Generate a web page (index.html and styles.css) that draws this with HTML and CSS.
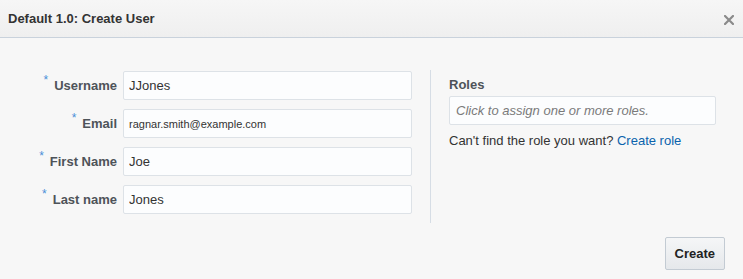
FILE: index.html
```html
<!DOCTYPE html>
<html>
<head>
<meta charset="utf-8">
<link rel="stylesheet" href="styles.css">
</head>
<body>
<div class="dialog">
  <header class="dlg-head">
    <h1 class="dlg-title">Default 1.0: Create User</h1>
    <span class="dlg-close" aria-label="Close">
      <svg width="10" height="10" viewBox="0 0 10 10"><path d="M1 1L9 9M9 1L1 9" stroke="#8a8a8a" stroke-width="2.2" stroke-linecap="square"/></svg>
    </span>
  </header>
  <div class="dlg-body">
    <div class="cols">
      <form class="user-form">
        <label class="lbl"><span class="req">*</span>Username</label>
        <input class="inp" type="text" value="JJones">
        <label class="lbl"><span class="req">*</span>Email</label>
        <input class="inp inp-small" type="text" value="ragnar.smith@example.com">
        <label class="lbl"><span class="req">*</span>First Name</label>
        <input class="inp" type="text" value="Joe">
        <label class="lbl"><span class="req">*</span>Last name</label>
        <input class="inp" type="text" value="Jones">
      </form>
      <section class="roles">
        <div class="roles-lbl">Roles</div>
        <div class="roles-inp">Click to assign one or more roles.</div>
        <p class="roles-help">Can't find the role you want? <a class="link" href="#">Create role</a></p>
      </section>
    </div>
    <div class="actions">
      <button class="btn" type="button">Create</button>
    </div>
  </div>
</div>
</body>
</html>
```
FILE: styles.css
```css
* { box-sizing: border-box; }
html, body { margin: 0; padding: 0; }
body {
  font-family: "Liberation Sans", Arial, sans-serif;
  font-size: 13px;
  line-height: 16px;
  color: #333;
  background: #f7f7f7;
}
.dialog {
  width: 743px;
  height: 279px;
  background: #f7f7f7;
  overflow: hidden;
}
.dlg-head {
  display: flex;
  align-items: flex-start;
  justify-content: space-between;
  height: 38px;
  padding: 11px 9px 0 8px;
  background: linear-gradient(#f6f6f6, #efefef);
  border-bottom: 1px solid #c9d2dc;
}
.dlg-title {
  margin: 0;
  font-size: 13px;
  line-height: 16px;
  font-weight: bold;
  color: #333;
}
.dlg-close {
  display: block;
  width: 10px;
  height: 10px;
  margin-top: 4px;
  line-height: 0;
}
.cols {
  display: flex;
  padding-top: 32px;
}
.user-form {
  display: grid;
  grid-template-columns: 97px 289px;
  column-gap: 6px;
  row-gap: 9px;
  align-items: center;
  margin: 0;
  padding: 1px 18px 9px 20px;
}
.lbl {
  text-align: right;
  font-weight: bold;
  color: #4e5359;
  white-space: nowrap;
}
.req {
  color: #4a8fd8;
  font-weight: normal;
  vertical-align: super;
  font-size: 12px;
  line-height: 0;
  margin-right: 6px;
}
.inp {
  display: block;
  width: 289px;
  height: 29px;
  margin: 0;
  padding: 0 5px;
  border: 1px solid #dde2e7;
  border-radius: 2px;
  background: #fcfdfe;
  font-family: "Liberation Sans", Arial, sans-serif;
  font-size: 13px;
  color: #333;
  outline: none;
}
.inp-small { font-size: 11px; }
.roles {
  flex: 1;
  border-left: 1px solid #d6dde5;
  padding: 7px 27px 0 18px;
}
.roles-lbl {
  font-weight: bold;
  color: #4e5359;
}
.roles-inp {
  margin-top: 3px;
  height: 29px;
  padding: 6px 6px 0;
  border: 1px solid #dde2e7;
  border-radius: 2px;
  background: #fcfdfe;
  font-style: italic;
  color: #7a7a7a;
}
.roles-help {
  margin: 8px 0 0;
  color: #333;
}
.link {
  color: #0b63ad;
  text-decoration: none;
}
.actions {
  display: flex;
  justify-content: flex-end;
  padding: 14px 18px 0 0;
}
.btn {
  height: 33px;
  padding: 0 9px;
  border: 1px solid #c3cbd3;
  border-radius: 2px;
  background: linear-gradient(#f5f6f7, #e5e8eb);
  font-family: "Liberation Sans", Arial, sans-serif;
  font-size: 13px;
  font-weight: bold;
  color: #222;
}
```
